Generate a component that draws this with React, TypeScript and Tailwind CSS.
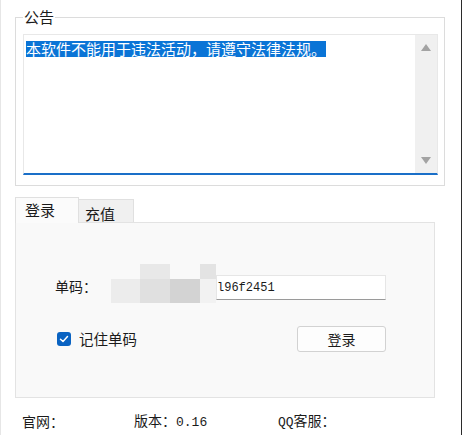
import React from "react";

const mosaic = [
  "", "bg-[#e8e8e8]", "", "bg-[#e3e3e3]",
  "bg-[#ececec]", "bg-[#e0e0e0]", "bg-[#d3d3d3]", "bg-[#f2f2f2]",
];

export default function App() {
  return (
    <div className="flex w-[463px] h-[435px] bg-white text-[#1b1b1b] font-['Noto_Sans_CJK_SC',sans-serif] overflow-hidden">
      <div className="w-[461px] h-full border-l border-[#e6e6e6] flex flex-col">
        {/* 公告 */}
        <fieldset className="ml-[14px] mt-[6px] w-[430px] border border-[#dcdcdc] pl-[7px] pr-[6px] pt-[6px] pb-[10px]">
          <legend className="px-[1px] text-[15px] leading-[22px]">公告</legend>
          <div className="flex h-[141px] bg-white border border-[#e8e8e8] border-b-2 border-b-[#1a6fc8]">
            <div className="flex-1 pl-[2px] pt-[1px]">
              <span className="bg-[#0a74d6] text-white text-[15px] leading-[16px] inline-block">
                本软件不能用于违法活动，请遵守法律法规。
              </span>
            </div>
            <div className="w-[22px] bg-[#f0f0f0] flex flex-col items-center justify-between py-[9px]">
              <svg width="10" height="7" viewBox="0 0 10 7">
                <path d="M5 0 L10 7 L0 7 Z" fill="#a3a3a3" />
              </svg>
              <svg width="10" height="7" viewBox="0 0 10 7">
                <path d="M0 0 L10 0 L5 7 Z" fill="#a3a3a3" />
              </svg>
            </div>
          </div>
        </fieldset>

        {/* tabs */}
        <div className="ml-[14px] mt-[11px] flex items-end">
          <div className="relative z-10 -mb-px w-[64px] h-[26px] bg-[#fbfbfb] border border-b-0 border-[#e0e0e0] pl-[9px] pt-[3px] text-[15px] leading-[18px]">
            登录
          </div>
          <div className="w-[55px] h-[23px] bg-[#f0f0f0] border border-l-0 border-b-0 border-[#e0e0e0] pl-[6px] pt-[5px] text-[15px] leading-[17px]">
            充值
          </div>
        </div>
        <div className="ml-[14px] w-[420px] h-[176px] bg-[#f9f9f9] border border-[#e3e3e3] pl-[39px] pt-[41px]">
          <div className="w-[331px]">
            <div className="flex items-start h-[39px]">
              <span className="w-[56px] mt-[12px] text-[14px] leading-[20px]">单码：</span>
              <div className="grid grid-cols-[29px_30px_30px_16px] grid-rows-[15px_24px]">
                {mosaic.map((c, i) => (
                  <div key={i} className={c} />
                ))}
              </div>
              <div className="mt-[11px] w-[170px] h-[25px] bg-white border border-[#e6e6e6] border-b-[#9a9a9a] flex items-center text-[12px] font-['Liberation_Mono',monospace]">
                l96f2451
              </div>
            </div>
            <div className="mt-[23px] flex items-center justify-between h-[26px]">
              <div className="flex items-center ml-[2px]">
                <div className="w-[14px] h-[14px] rounded-[3px] bg-[#0a63c2] flex items-center justify-center">
                  <svg width="10" height="8" viewBox="0 0 10 8">
                    <path d="M1.5 4.2 L4 6.5 L8.5 1.5" stroke="white" strokeWidth="1.5" fill="none" strokeLinecap="round" strokeLinejoin="round" />
                  </svg>
                </div>
                <span className="ml-[8px] text-[14.5px] leading-[20px]">记住单码</span>
              </div>
              <button className="w-[89px] h-[26px] bg-[#fdfdfd] border border-[#d2d2d2] rounded-[3px] text-[14px] leading-[20px]">
                登录
              </button>
            </div>
          </div>
        </div>

        {/* footer */}
        <div className="mt-[13px] pl-[21px] flex items-center h-[20px] text-[14px] leading-[20px]">
          <span className="w-[112px]">官网：</span>
          <span className="w-[144px]">
            版本：<span className="font-['Liberation_Mono',monospace] text-[13px]">0.16</span>
          </span>
          <span>
            <span className="font-['Liberation_Mono',monospace] text-[13px]">QQ</span>客服：
          </span>
        </div>
      </div>
      <div className="w-[1px] h-full bg-[#2b2b2b]" />
      <div className="w-[1px] h-full bg-white" />
    </div>
  );
}
